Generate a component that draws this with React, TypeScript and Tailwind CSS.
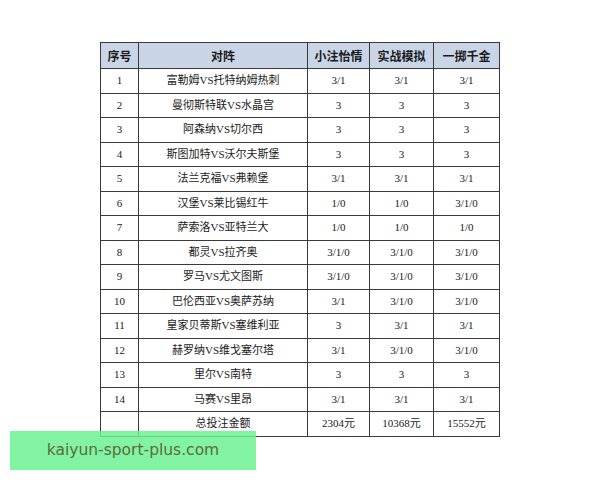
const rows: [string, string, string, string, string][] = [
  ["1", "富勒姆VS托特纳姆热刺", "3/1", "3/1", "3/1"],
  ["2", "曼彻斯特联VS水晶宫", "3", "3", "3"],
  ["3", "阿森纳VS切尔西", "3", "3", "3"],
  ["4", "斯图加特VS沃尔夫斯堡", "3", "3", "3"],
  ["5", "法兰克福VS弗赖堡", "3/1", "3/1", "3/1"],
  ["6", "汉堡VS莱比锡红牛", "1/0", "1/0", "3/1/0"],
  ["7", "萨索洛VS亚特兰大", "1/0", "1/0", "1/0"],
  ["8", "都灵VS拉齐奥", "3/1/0", "3/1/0", "3/1/0"],
  ["9", "罗马VS尤文图斯", "3/1/0", "3/1/0", "3/1/0"],
  ["10", "巴伦西亚VS奥萨苏纳", "3/1", "3/1/0", "3/1/0"],
  ["11", "皇家贝蒂斯VS塞维利亚", "3", "3/1", "3/1"],
  ["12", "赫罗纳VS维戈塞尔塔", "3/1", "3/1/0", "3/1/0"],
  ["13", "里尔VS南特", "3", "3", "3"],
  ["14", "马赛VS里昂", "3/1", "3/1", "3/1"],
  ["", "总投注金额", "2304元", "10368元", "15552元"],
];

const font = {
  fontFamily: '"Liberation Serif", "Noto Sans CJK SC", serif',
};

export default function App() {
  return (
    <div className="relative w-[600px] h-[480px] bg-white overflow-hidden">
      <div className="pt-[42px] pl-[100px]">
        <table
          className="border-collapse text-[#1a1a1a] table-fixed w-[399px]"
          style={font}
        >
          <colgroup>
            <col className="w-[38px]" />
            <col className="w-[169px]" />
            <col className="w-[62px]" />
            <col className="w-[64px]" />
            <col className="w-[66px]" />
          </colgroup>
          <thead>
            <tr className="h-[26px] bg-[#c9d5e7] text-[12px] font-bold">
              {["序号", "对阵", "小注怡情", "实战模拟", "一掷千金"].map((h) => (
                <th
                  key={h}
                  className="border-[1.5px] border-[#3a3a3a] text-center p-0"
                  style={{ fontFamily: '"Noto Sans CJK SC", sans-serif' }}
                >
                  {h}
                </th>
              ))}
            </tr>
          </thead>
          <tbody>
            {rows.map((r, i) => (
              <tr key={i} className="h-[24.5px] text-[11px]">
                {r.map((c, j) => (
                  <td
                    key={j}
                    className="border-[1.5px] border-[#3a3a3a] text-center p-0 leading-none"
                  >
                    {c}
                  </td>
                ))}
              </tr>
            ))}
          </tbody>
        </table>
      </div>

      <div className="absolute left-[10px] top-[431px] w-[246px] h-[39px] bg-[#6cf193]/85 flex items-center justify-center">
        <span
          className="text-[15.5px] text-[#5e6a3c]"
          style={{ fontFamily: '"DejaVu Sans", sans-serif' }}
        >
          kaiyun-sport-plus.com
        </span>
      </div>
    </div>
  );
}
